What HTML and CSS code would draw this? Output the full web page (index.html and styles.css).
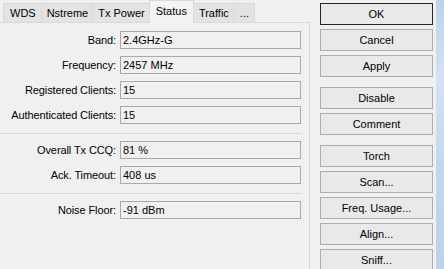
FILE: index.html
```html
<!DOCTYPE html>
<html lang="en">
<head>
    <meta charset="UTF-8">
    <title>Wireless - Status</title>
    <link rel="stylesheet" href="styles.css">
</head>
<body>
    <div class="dialog">
        <div class="main">
            <div class="tabs">
                <div class="tab">WDS</div>
                <div class="tab">Nstreme</div>
                <div class="tab">Tx Power</div>
                <div class="tab active">Status</div>
                <div class="tab">Traffic</div>
                <div class="tab">...</div>
            </div>
            <div class="panel">
                <div class="group">
                    <div class="row"><span class="label">Band:</span><span class="field">2.4GHz-G</span></div>
                    <div class="row"><span class="label">Frequency:</span><span class="field">2457 MHz</span></div>
                    <div class="row"><span class="label">Registered Clients:</span><span class="field">15</span></div>
                    <div class="row"><span class="label">Authenticated Clients:</span><span class="field">15</span></div>
                </div>
                <div class="separator"></div>
                <div class="group">
                    <div class="row"><span class="label">Overall Tx CCQ:</span><span class="field">81 %</span></div>
                    <div class="row"><span class="label">Ack. Timeout:</span><span class="field">408 us</span></div>
                </div>
                <div class="separator"></div>
                <div class="group">
                    <div class="row"><span class="label">Noise Floor:</span><span class="field">-91 dBm</span></div>
                </div>
            </div>
        </div>

        <div class="buttons">
            <div class="btn-group">
                <button class="default">OK</button>
                <button>Cancel</button>
                <button>Apply</button>
            </div>
            <div class="btn-group">
                <button>Disable</button>
                <button>Comment</button>
            </div>
            <div class="btn-group">
                <button>Torch</button>
                <button>Scan...</button>
                <button>Freq. Usage...</button>
                <button>Align...</button>
                <button>Sniff...</button>
            </div>
        </div>

        <div class="desktop"></div>
    </div>
</body>
</html>
```

FILE: styles.css
```css
body {
    margin: 0;
    padding: 0;
    background-color: #f0f0f0;
    font-family: "Liberation Sans", Arial, sans-serif;
    font-size: 11px;
    color: #000;
}
.dialog {
    display: flex;
    width: 444px;
    height: 269px;
    overflow: hidden;
}
.main {
    width: 310px;
    display: flex;
    flex-direction: column;
}
/* tab strip */
.tabs {
    display: flex;
    align-items: flex-end;
    height: 22px;
    padding-left: 3px;
}
.tab {
    height: 19px;
    line-height: 19px;
    padding: 0 4px 0 5px;
    border: 1px solid #d9d9d9;
    border-bottom: none;
    border-right: none;
    background-color: #e3e3e3;
    box-sizing: border-box;
}
.tab:first-child {
    padding: 0 5px 0 6px;
}
.tab:last-child {
    padding: 0 5px 0 6px;
    border-right: 1px solid #d9d9d9;
}
.tab.active {
    height: 23px;
    line-height: 20px;
    padding: 0 6px;
    margin-bottom: -1px;
    background-color: #f4f4f4;
    border-right: 1px solid #d9d9d9;
    position: relative;
    z-index: 1;
}
.tab.active + .tab {
    border-left: none;
}
.panel {
    flex: 1;
    border-top: 1px solid #d9d9d9;
    border-right: 1px solid #d9d9d9;
    padding-top: 8px;
}
.group {
    display: flex;
    flex-direction: column;
    gap: 7px;
}
.row {
    display: flex;
    align-items: center;
    gap: 4px;
}
.label {
    width: 116px;
    text-align: right;
    white-space: nowrap;
    letter-spacing: -0.1px;
}
.field {
    width: 181px;
    height: 18px;
    line-height: 16px;
    padding: 0 2px;
    border: 1px solid #a9a9a9;
    background-color: #f0f0f0;
    box-sizing: border-box;
}
.separator {
    width: 302px;
    height: 1px;
    background-color: #dadada;
    margin: 9px 0 7px;
}
/* button column */
.buttons {
    width: 113px;
    margin-left: 10px;
    padding-top: 3px;
    display: flex;
    flex-direction: column;
    gap: 10px;
}
.btn-group {
    display: flex;
    flex-direction: column;
    gap: 4px;
}
button {
    height: 22px;
    width: 100%;
    padding: 0;
    font-family: "Liberation Sans", Arial, sans-serif;
    font-size: 11px;
    color: #000;
    background-color: #e9e9e9;
    border: 1px solid #adadad;
    border-radius: 0;
}
button.default {
    border-color: #262626;
}
.desktop {
    flex: 1;
    margin-left: 3px;
    background: linear-gradient(to bottom, #bcd3ec 0%, #d3e2f3 30%, #c3d8ef 60%, #bcd2eb 100%);
}
```
